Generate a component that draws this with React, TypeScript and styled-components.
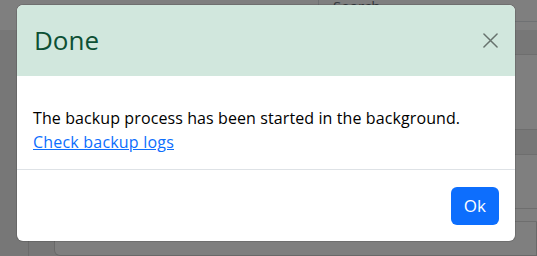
import React from "react";
import styled, { createGlobalStyle } from "styled-components";

const GlobalStyle = createGlobalStyle`
  html, body {
    margin: 0;
    padding: 0;
    width: 537px;
    height: 256px;
    overflow: hidden;
    font-family: "Open Sans", "Liberation Sans", sans-serif;
  }
  * {
    box-sizing: border-box;
  }
`;

const Page = styled.div`
  position: relative;
  width: 537px;
  height: 256px;
  background: #eeeeee;
  display: flex;
  flex-direction: column;
`;

const TopBar = styled.header`
  height: 32px;
  background: #ffffff;
  display: flex;
  justify-content: flex-end;
  align-items: flex-start;
`;

const SearchInput = styled.div`
  width: 219px;
  height: 22px;
  border: 1px solid #dee2e6;
  border-top: none;
  border-right: none;
  border-radius: 0 0 0 4px;
  color: #6c757d;
  font-size: 15px;
  line-height: 12px;
  padding-left: 14px;
  overflow: hidden;
`;

const Main = styled.div`
  flex: 1;
  display: flex;
`;

const Sidebar = styled.aside`
  width: 29px;
  border-right: 1px solid #d6d6d6;
`;

const Content = styled.div`
  flex: 1;
  display: flex;
  flex-direction: column;
`;

const TableRow = styled.div<{ $h: number; $bg: string }>`
  height: ${({ $h }) => $h}px;
  background: ${({ $bg }) => $bg};
  border-bottom: 1px solid #dcdcdc;
`;

const Card = styled.div`
  margin-left: 25px;
  height: 34px;
  border: 1px solid #d2d2d2;
  border-top: none;
  border-radius: 0 0 0 6px;
  background: #ffffff;
`;

const Backdrop = styled.div`
  position: absolute;
  inset: 0;
  background: rgba(0, 0, 0, 0.5);
  padding: 5px 22px 0 17px;
`;

const Modal = styled.div`
  width: 498px;
  height: 236px;
  background: #ffffff;
  border-radius: 6px;
  overflow: hidden;
  display: flex;
  flex-direction: column;
  box-shadow: 0 0 0 1px rgba(0, 0, 0, 0.12);
`;

const ModalHeader = styled.div`
  height: 71px;
  background: #d1e7dd;
  display: flex;
  align-items: center;
  justify-content: space-between;
  padding: 0 16px 0 17px;
`;

const Title = styled.h5`
  margin: 0;
  font-size: 26px;
  font-weight: 500;
  color: #0d5034;
  line-height: 1.2;
`;

const CloseButton = styled.button`
  width: 16px;
  height: 16px;
  padding: 0;
  margin-right: 1px;
  border: none;
  background: transparent;
  opacity: 0.5;
  display: flex;
  align-items: center;
  justify-content: center;
  cursor: pointer;
`;

const ModalBody = styled.div`
  height: 94px;
  padding: 30px 16px 16px;
  font-size: 16px;
  line-height: 24px;
  border-bottom: 1px solid #dee2e6;
`;

const Message = styled.div`
  color: #000000;
  letter-spacing: 0.1px;
`;

const LogLink = styled.a`
  color: #0d6efd;
  text-decoration: underline;
  letter-spacing: 0.2px;
`;

const ModalFooter = styled.div`
  flex: 1;
  display: flex;
  justify-content: flex-end;
  align-items: center;
  padding: 0 16px;
`;

const OkButton = styled.button`
  height: 38px;
  padding: 0 13px;
  border: none;
  border-radius: 6px;
  background: #0d6efd;
  color: #ffffff;
  font-family: inherit;
  font-size: 17px;
  cursor: pointer;
`;

const App = () => {
  return (
    <>
      <GlobalStyle />
      <Page>
        <TopBar>
          <SearchInput>Search</SearchInput>
        </TopBar>
        <Main>
          <Sidebar />
          <Content>
            <TableRow $h={25} $bg="#eeeeee" />
            <TableRow $h={75} $bg="#ffffff" />
            <TableRow $h={25} $bg="#eeeeee" />
            <TableRow $h={54} $bg="#ffffff" />
            <TableRow $h={13} $bg="#ffffff" />
            <Card />
          </Content>
        </Main>
        <Backdrop>
          <Modal>
            <ModalHeader>
              <Title>Done</Title>
              <CloseButton aria-label="Close">
                <svg width="15" height="15" viewBox="0 0 16 16">
                  <path
                    d="M1 1 L15 15 M15 1 L1 15"
                    stroke="#000"
                    strokeWidth="1.6"
                    strokeLinecap="round"
                  />
                </svg>
              </CloseButton>
            </ModalHeader>
            <ModalBody>
              <Message>The backup process has been started in the background.</Message>
              <LogLink href="#">Check backup logs</LogLink>
            </ModalBody>
            <ModalFooter>
              <OkButton>Ok</OkButton>
            </ModalFooter>
          </Modal>
        </Backdrop>
      </Page>
    </>
  );
};

export default App;
